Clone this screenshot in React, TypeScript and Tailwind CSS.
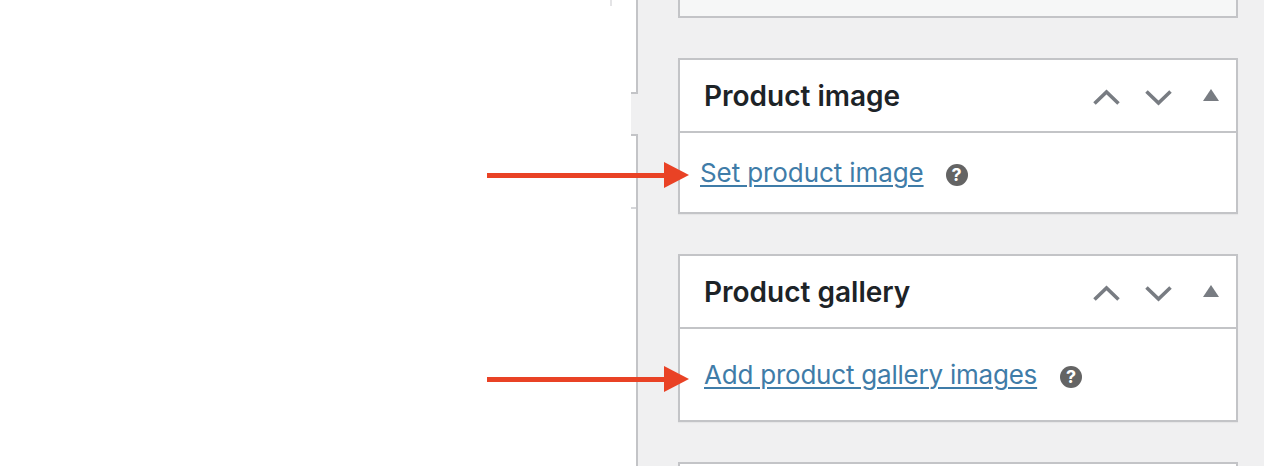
function Controls() {
  return (
    <div className="mt-[4px] flex items-start">
      <svg width="27" height="17" viewBox="0 0 27 17" className="mr-[25px]" fill="none">
        <path d="M1.5 14.5 L13.5 3 L25.5 14.5" stroke="#787c82" strokeWidth="3.6" />
      </svg>
      <svg width="27" height="17" viewBox="0 0 27 17" className="mr-[31px]" fill="none">
        <path d="M1.5 2.5 L13.5 14 L25.5 2.5" stroke="#787c82" strokeWidth="3.6" />
      </svg>
      <svg width="16" height="12" viewBox="0 0 16 12" className="mr-[17px]">
        <path d="M8 0 L16 12 L0 12 Z" fill="#787c82" />
      </svg>
    </div>
  );
}

function Help() {
  return (
    <span className="mt-[5px] flex h-[22px] w-[22px] items-center justify-center rounded-full bg-[#646464] text-[18px] font-bold leading-none text-white">
      ?
    </span>
  );
}

function Box({ title, link, bodyClass, linkClass }: { title: string; link: string; bodyClass: string; linkClass: string }) {
  return (
    <section className="border-2 border-[#c3c4c7] bg-white shadow-[0_1px_1px_rgba(0,0,0,0.04)]">
      <header className="flex h-[73px] items-center justify-between border-b-2 border-[#c3c4c7] pl-[24px]">
        <h2 className="text-[28px] font-semibold leading-none text-[#1d2327]">{title}</h2>
        <Controls />
      </header>
      <div className={`flex items-center ${bodyClass}`}>
        <a href="#" className={`text-[26px] leading-none text-[#3f7ca8] underline underline-offset-[3px] decoration-2 ${linkClass}`}>
          {link}
        </a>
        <Help />
      </div>
    </section>
  );
}

function Arrow({ className }: { className: string }) {
  return (
    <svg width="203" height="26" viewBox="0 0 203 26" className={`absolute left-[487px] ${className}`}>
      <rect x="0" y="11" width="180" height="5" fill="#e94225" />
      <path d="M177 0 L202 13 L177 26 Z" fill="#e94225" />
    </svg>
  );
}

export default function App() {
  return (
    <div className="relative flex h-[466px] w-[1264px] overflow-hidden bg-[#f0f0f1] font-['Inter','Liberation_Sans',sans-serif]">
      <div className="relative h-full w-[638px] shrink-0 border-r-2 border-[#c3c4c7] bg-white">
        <div className="absolute left-[610px] top-0 h-[6px] w-[2px] bg-[#e4e4e6]" />
        <div className="absolute left-[631px] top-[92px] h-[44px] w-[7px] border-y-2 border-[#c3c4c7] bg-[#f0f0f1]" />
        <div className="absolute left-[631px] top-[207px] h-[2px] w-[5px] bg-[#d5d6d9]" />
      </div>
      <div className="ml-[40px] flex w-[560px] flex-col gap-[40px]">
        <div className="h-[18px] shrink-0 border-x-2 border-b-2 border-[#c3c4c7] bg-[#f6f7f7]" />
        <Box title="Product image" link="Set product image" bodyClass="h-[79px] pl-[20px]" linkClass="mr-[22px] tracking-[-0.1px]" />
        <Box title="Product gallery" link="Add product gallery images" bodyClass="h-[91px] pl-[24px]" linkClass="mr-[23px] tracking-[-0.22px]" />
        <div className="h-[20px] shrink-0 border-2 border-[#c3c4c7] bg-white" />
      </div>
      <Arrow className="top-[162px]" />
      <Arrow className="top-[366px]" />
    </div>
  );
}
